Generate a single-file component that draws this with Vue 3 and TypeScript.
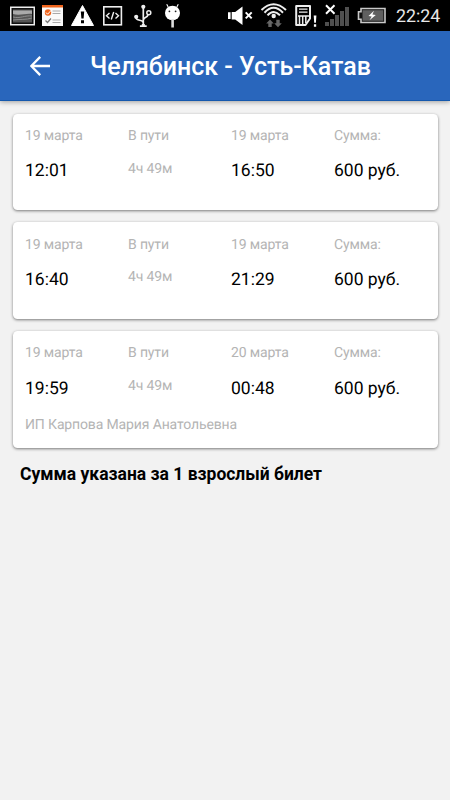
<script setup lang="ts">
interface Trip {
  departDate: string
  departTime: string
  duration: string
  arriveDate: string
  arriveTime: string
  price: string
  carrier?: string
}

const trips: Trip[] = [
  { departDate: '19 марта', departTime: '12:01', duration: '4ч 49м', arriveDate: '19 марта', arriveTime: '16:50', price: '600 руб.' },
  { departDate: '19 марта', departTime: '16:40', duration: '4ч 49м', arriveDate: '19 марта', arriveTime: '21:29', price: '600 руб.' },
  { departDate: '19 марта', departTime: '19:59', duration: '4ч 49м', arriveDate: '20 марта', arriveTime: '00:48', price: '600 руб.', carrier: 'ИП Карпова Мария Анатольевна' },
]
</script>

<template>
  <div class="screen">
    <div class="status">
      <div class="status-group">
        <svg width="38" height="31" viewBox="0 0 38 31">
          <rect x="10.75" y="7.25" width="23.5" height="17.5" fill="#111" stroke="#eee" stroke-width="1.5" />
          <rect x="13" y="9.5" width="19" height="13" fill="#555" />
          <path d="M13 10.5H32V14C26 13 20 16 13 14Z" fill="#aaa" />
          <path d="M13 17C20 19 25 15 32 16M13 20C20 19 26 20 32 18" fill="none" stroke="#8c8c8c" />
        </svg>
        <svg width="29" height="31" viewBox="38 0 29 31">
          <rect x="42" y="5" width="21" height="21" fill="#fafafa" />
          <rect x="42" y="5" width="21" height="2.5" fill="#f0651d" />
          <circle cx="48" cy="12.5" r="3.2" fill="#f0651d" />
          <path d="M46 12.5l1.6 1.7L51.5 10" fill="none" stroke="#fff" />
          <path d="M52.5 11h8M52.5 13.5h8M52.5 20h8M52.5 22.5h8" stroke="#aaa" />
          <path d="M45.5 20.5l2 2 3.5-4" fill="none" stroke="#777" stroke-width="1.2" />
        </svg>
        <svg width="31" height="31" viewBox="67 0 31 31">
          <path d="M82.5 5.5L93.5 25.5H71.5Z" fill="#fff" stroke="#fff" stroke-linejoin="round" />
          <path d="M80.8 11.5h3.4l-.6 7h-2.2zM81 20.3h3v3h-3z" fill="#000" />
        </svg>
        <svg width="32" height="31" viewBox="98 0 32 31">
          <rect x="103.8" y="6.8" width="17.6" height="18" fill="none" stroke="#eee" stroke-width="1.6" />
          <path d="M109.5 13l-3 2.7 3 2.7M115.5 13l3 2.7-3 2.7M113.7 12l-2.4 7.5" fill="none" stroke="#eee" stroke-width="1.4" />
        </svg>
        <svg width="28" height="31" viewBox="130 0 28 31">
          <g fill="none" stroke="#eee" stroke-width="1.7">
            <path d="M143.3 7v18M136 17.5c0 4 7 1.5 7 5M143.5 20c0-3.5 3.5-1.5 4.5-5" />
            <circle cx="148.8" cy="12.8" r="2" stroke-width="1.5" />
          </g>
          <circle cx="143.3" cy="6.8" r="2.1" fill="#eee" />
          <circle cx="136.2" cy="16.8" r="2.1" fill="#eee" />
          <path d="M141.8 24h3v1.3h1.9v1.7h-6.8v-1.7h1.9z" fill="#eee" />
        </svg>
        <svg width="32" height="31" viewBox="158 0 32 31">
          <path d="M168.2 7l-1.5-2.7M176.8 7l1.5-2.7" stroke="#fff" stroke-width="1.1" />
          <ellipse cx="172.5" cy="13" rx="7.5" ry="7.3" fill="#fff" />
          <path d="M171.3 19h2.6v8.5h-2.6z" fill="#ddd" />
          <circle cx="169.4" cy="11.3" r=".9" fill="#222" />
          <circle cx="175.6" cy="11.3" r=".9" fill="#222" />
        </svg>
      </div>
      <div class="status-group">
        <svg width="32" height="31" viewBox="224 0 32 31">
          <path d="M228 12.3h2.6v6.8H228zM231.7 12h3.5l7.3-5.5V25l-7.3-5.6h-3.5z" fill="#fff" />
          <path d="M245.7 12.4l6 6M251.7 12.4l-6 6" stroke="#fff" stroke-width="2" />
        </svg>
        <svg width="33" height="31" viewBox="256 0 33 31">
          <g fill="none" stroke="#eee" stroke-width="2">
            <path d="M261.5 10Q273.5-1.5 286 10" />
            <path d="M264.5 12.7Q273.5 3 283 12.7" />
            <path d="M267.5 15.3Q273.5 8.5 280 15.3" />
          </g>
          <circle cx="273.7" cy="16" r="2.2" fill="#eee" />
          <path d="M270 19.5l3.8 4h-2.1v3.5h-3.4v-3.5h-2.1zM278 27.2l3.8-4h-2.1v-3.4h-3.4v3.4h-2.1z" fill="#666" />
        </svg>
        <svg width="32" height="31" viewBox="289 0 32 31">
          <path d="M296.2 6h13.8v12.5l-4.5 6.5h-9.3z" fill="none" stroke="#eee" stroke-width="2" stroke-linejoin="round" />
          <path d="M299 9.2h8.5M299 12.2h8.5" stroke="#eee" stroke-width="1.3" />
          <path d="M298 16h11M299.5 16v8M302.7 16v8M305.8 16v7" stroke="#eee" stroke-width="1.5" />
          <path d="M313.7 15.5h2.7l-.5 7.3h-1.7zM313.9 24.3h2.3v2.4h-2.3z" fill="#fff" />
        </svg>
        <svg width="32" height="31" viewBox="321 0 32 31">
          <path d="M325 22h4v4h-4zM330 19h4v7h-4zM335 15h4v11h-4zM340 11h4v15h-4zM345 7h4v19h-4z" fill="#505050" />
          <path d="M326 5.2l8.5 8.5M334.5 5.2l-8.5 8.5" stroke="#fff" stroke-width="2" />
        </svg>
        <svg width="37" height="31" viewBox="353 0 37 31">
          <path d="M361 8.5h24v14h-24v-3.2h-2.5v-7.6h2.5z" fill="#111" stroke="#c9c9c9" stroke-width="1.6" />
          <rect x="362.5" y="10.2" width="20.8" height="10.6" fill="#606060" />
          <path d="M374 10.8l-5.5 5.1 3.2.5-2.2 3.8 6.3-5.2-3.4-.6z" fill="#fff" />
        </svg>
        <span class="clock">22:24</span>
      </div>
    </div>

    <header class="bar">
      <svg class="back" width="20" height="20" viewBox="0 0 20 20">
        <path d="M10.2.9L1.3 10l8.9 9.1M1.5 10H20" fill="none" stroke="#fff" stroke-width="2.3" />
      </svg>
      <h1>Челябинск - Усть-Катав</h1>
    </header>

    <main>
      <article v-for="trip in trips" :key="trip.departTime" class="card">
        <div class="grid">
          <div>
            <div class="label">{{ trip.departDate }}</div>
            <div class="value">{{ trip.departTime }}</div>
          </div>
          <div>
            <div class="label">В пути</div>
            <div class="label duration">{{ trip.duration }}</div>
          </div>
          <div>
            <div class="label">{{ trip.arriveDate }}</div>
            <div class="value">{{ trip.arriveTime }}</div>
          </div>
          <div>
            <div class="label">Сумма:</div>
            <div class="value">{{ trip.price }}</div>
          </div>
        </div>
        <div v-if="trip.carrier" class="label carrier">{{ trip.carrier }}</div>
      </article>
      <p class="note">Сумма указана за 1 взрослый билет</p>
    </main>
  </div>
</template>

<style>
body {
  background: #f2f2f2;
}
</style>

<style scoped>
.screen {
  height: 800px;
  overflow: hidden;
  background: #f2f2f2;
  font-family: Roboto, "Noto Sans", sans-serif;
  color: #000;
}
.status {
  display: flex;
  justify-content: space-between;
  height: 31px;
  background: #000;
}
.status-group {
  display: flex;
}
.status svg {
  display: block;
  flex: none;
}
.clock {
  width: 54px;
  margin-left: 6px;
  box-sizing: border-box;
  font-size: 17.8px;
  line-height: 33px;
  color: #e8e8e8;
  text-rendering: geometricPrecision;
}
.bar {
  display: flex;
  align-items: center;
  box-sizing: border-box;
  height: 70px;
  padding-left: 30px;
  background: #2966bc;
  border-bottom: 1px solid #1458ad;
  box-shadow: 0 1px 5px rgba(0, 0, 0, 0.35);
}
.back {
  margin-top: 1px;
}
h1 {
  margin: 3px 0 0 40px;
  font-size: 25px;
  font-weight: 500;
  line-height: 30px;
  color: #fff;
  white-space: nowrap;
}
main {
  padding: 12.7px 12.5px 0;
}
.card {
  box-sizing: border-box;
  height: 96.2px;
  margin-bottom: 12.5px;
  padding: 13.4px 12.5px 0;
  background: #fff;
  border-radius: 4.5px;
  box-shadow: 0 1px 3px rgba(0, 0, 0, 0.5);
  text-rendering: geometricPrecision;
}
.card:last-of-type {
  height: 116.5px;
}
.grid {
  display: grid;
  grid-template-columns: repeat(4, 103px);
  height: 60px;
}
.label {
  font-size: 14px;
  letter-spacing: -0.14px;
  line-height: 18px;
  color: #b4b4b4;
  white-space: nowrap;
}
.value {
  margin-top: 15.2px;
  font-size: 17.5px;
  line-height: 22px;
  white-space: nowrap;
}
.duration {
  margin-top: 14.5px;
}
.carrier {
  margin-top: 11.3px;
}
.note {
  margin: 0 0 0 7.5px;
  padding-top: 2.7px;
  font-size: 17.5px;
  font-weight: 700;
  line-height: 22px;
}
</style>
